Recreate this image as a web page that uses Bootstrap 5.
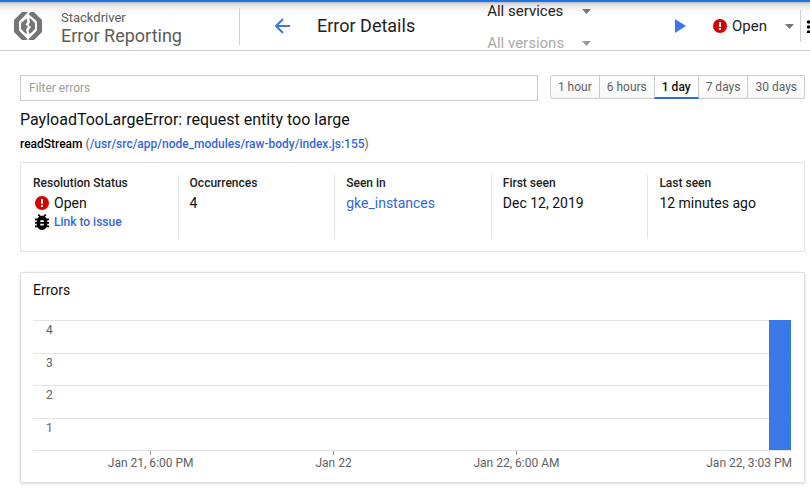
<!DOCTYPE html>
<html lang="en">
<head>
<meta charset="utf-8">
<meta name="viewport" content="width=device-width, initial-scale=1">
<title>Error Details</title>
<link rel="stylesheet" href="https://cdn.jsdelivr.net/npm/bootstrap@5.3.0/dist/css/bootstrap.min.css">
<style>
  body { font-family: Roboto, "Liberation Sans", sans-serif; font-size: 14px; line-height: 20px; color: #111; background: #fff; overflow-x: hidden; }
  a { color: #3367d6; text-decoration: none; }
  svg { display: block; flex: none; }
  .topbar { height: 51px; border-top: 2px solid #1a73e8; border-bottom: 1px solid #d0d0d0; background: linear-gradient(#bdbdbd, #e6e6e6 3px, #f7f7f7 8px, #fff 14px); overflow: hidden; }
  .brand { width: 239px; padding-left: 14px; gap: 19px; color: #5c5c5c; }
  .brand:hover { color: #5c5c5c; }
  .brand-text { padding-top: 3px; }
  .brand-top { font-size: 13px; line-height: 16px; }
  .brand-name { font-size: 18px; line-height: 20px; }
  .rule { width: 1px; background: #d0d0d0; flex: none; }
  .icon-btn { border: 0; background: none; padding: 0; flex: none; }
  .back { margin: 0 27px 0 34px; }
  .page-title { font-size: 18px; line-height: 24px; font-weight: 400; color: #222; }
  .picks { margin: 2px 0 0 72px; gap: 12px; }
  .pick { border: 0; padding: 0; width: 104px; height: 20px; font-size: 15px; line-height: 20px; color: #222; appearance: none;
    background: url("data:image/svg+xml,%3Csvg xmlns='http://www.w3.org/2000/svg' width='9' height='5'%3E%3Cpath d='M0 0h9L4.5 5z' fill='%23757575'/%3E%3C/svg%3E") no-repeat right 8px; }
  .pick:disabled { color: #aaa; opacity: 1; background-image: url("data:image/svg+xml,%3Csvg xmlns='http://www.w3.org/2000/svg' width='9' height='5'%3E%3Cpath d='M0 0h9L4.5 5z' fill='%239a9a9a'/%3E%3C/svg%3E"); }
  .pick-status { width: 62px; }
  .status { gap: 5px; margin: 0 6px 0 27px; }
  .more { width: 9px; overflow: hidden; }
  main { padding: 24px 5px 9px 20px; }
  .filter { height: 26px; border: 1px solid #ccc; border-radius: 0; padding: 0 8px; font-size: 12px; line-height: 16px; }
  .filter::placeholder { color: #9e9e9e; }
  .ranges .btn { height: 24px; padding: 3px 7px; font-size: 12px; line-height: 16px; border: 1px solid #ccc; border-radius: 2px; color: #616161; background: linear-gradient(#fff, #f8f8f8); }
  .ranges .btn.active { color: #111; border-bottom: 2px solid #3367d6; font-weight: 500; background: #fff; }
  .err-title { font-size: 16px; line-height: 20px; font-weight: 400; margin-top: 9px; }
  .frame-line { font-size: 12px; line-height: 16px; margin-top: 6px; color: #616161; }
  .medium { font-weight: 500; }
  .facts { margin-top: 10px; padding: 12px 0; border: 1px solid #e4e4e4; }
  .fact { min-height: 64px; padding-left: 12px; }
  .fact + .fact { padding-left: 11px; border-left: 1px solid #e4e4e4; }
  .fact-name { font-size: 12px; line-height: 16px; font-weight: 500; color: #222; }
  .fact-value { line-height: 20px; margin-top: 2px; }
  .issue { font-size: 12px; line-height: 16px; font-weight: 500; }
  .issue-row { margin-top: 1px; }
  .chart-card { margin-top: 20px; padding: 7px 12px 9px; border: 1px solid #e0e0e0; border-radius: 2px; box-shadow: 0 1px 3px rgba(0,0,0,.14); }
  .chart-title { font-size: 14px; line-height: 20px; font-weight: 400; }
  .plot { margin-top: 20px; height: 131px; border-bottom: 1px solid #e4e4e4; font-size: 12px; line-height: 18px; color: #616161; }
  .level { border-top: 1px solid #e4e4e4; padding-left: 13px; }
  .bar { bottom: 0; background: #3b78e7; }
  .times { height: 22px; font-size: 12px; line-height: 16px; color: #616161; }
  .time { position: absolute; top: 0; transform: translateX(-50%); white-space: nowrap; }
  .time::before { content: ""; display: block; width: 1px; height: 4px; margin: 0 auto; background: #999; }
  .time-end { transform: none; right: 0; }
  .time-end::before { background: none; }
</style>
<script src="https://cdn.jsdelivr.net/npm/bootstrap@5.3.0/dist/js/bootstrap.bundle.min.js"></script>
</head>
<body>
<header class="topbar d-flex align-items-center">
  <a class="brand d-flex align-items-center flex-shrink-0" href="#">
    <svg width="28" height="28" viewBox="0 0 28 28" fill="#757575" aria-hidden="true">
      <path d="M8 0h6L9.500 5 5 9.500v9L13.500 27l-1 1H8l-8-8V8z"/>
      <path d="M16.500 0H20l8 8v12l-8 8h-6l4.500-5 4.500-4.500v-9L14.500 2z"/>
      <path d="M12.500 6.500l1 3-2 3 2.500 2-2 3 1 4h-1.500L7 17v-6z"/>
      <path d="M15 6.500h1.500L21 11v6l-4.500 4.500H15l-.500-3 2.500-3.500-2.500-2 1.500-3z"/>
    </svg>
    <span class="brand-text d-flex flex-column">
      <span class="brand-top">Stackdriver</span>
      <span class="brand-name">Error Reporting</span>
    </span>
  </a>
  <div class="rule" style="height:37px"></div>
  <button class="icon-btn back" type="button" aria-label="Back">
    <svg width="16" height="16" viewBox="0 0 16 16" fill="none" stroke="#3b78e7" stroke-width="2"><path d="M16 8H2M9 1L2 8l7 7"/></svg>
  </button>
  <h1 class="page-title m-0 text-nowrap">Error Details</h1>
  <div class="picks d-flex flex-column flex-shrink-0">
    <select class="pick" aria-label="Service"><option>All services</option></select>
    <select class="pick" aria-label="Version" disabled><option>All versions</option></select>
  </div>
  <button class="icon-btn ms-auto" type="button" aria-label="Start">
    <svg width="11" height="14" viewBox="0 0 11 14" fill="#3b78e7"><path d="M0 0l11 7-11 7z"/></svg>
  </button>
  <div class="status d-flex align-items-center">
    <svg width="14" height="14" viewBox="0 0 14 14" aria-hidden="true"><circle cx="7" cy="7" r="7" fill="#d50000"/><path d="M6 3h2v5H6zM6 9h2v2H6z" fill="#fff"/></svg>
    <select class="pick pick-status" aria-label="Resolution status"><option>Open</option></select>
  </div>
  <div class="rule" style="height:32px"></div>
  <button class="icon-btn more" type="button" aria-label="More">
    <svg width="16" height="14" viewBox="0 0 16 14"><g><circle cx="7.500" cy="3" r="1.700"/><circle cx="7.500" cy="8" r="1.700"/><circle cx="7.500" cy="13" r="1.700"/></g></svg>
  </button>
</header>
<main>
  <div class="d-flex align-items-start gap-2">
    <input class="filter form-control flex-grow-1" type="text" placeholder="Filter errors" aria-label="Filter errors">
    <div class="ranges btn-group flex-shrink-0 ms-1" role="group" aria-label="Time range">
      <button class="btn" type="button">1 hour</button>
      <button class="btn" type="button">6 hours</button>
      <button class="btn active" type="button" aria-pressed="true">1 day</button>
      <button class="btn" type="button">7 days</button>
      <button class="btn" type="button">30 days</button>
    </div>
  </div>
  <h2 class="err-title mb-0">PayloadTooLargeError: request entity too large</h2>
  <div class="frame-line"><span class="medium text-black">readStream</span> (<a class="medium" href="#">/usr/src/app/node_modules/raw-body/index.js:155</a>)</div>
  <section class="facts row row-cols-5 g-0">
    <div class="fact col">
      <div class="fact-name">Resolution Status</div>
      <div class="fact-value d-flex align-items-center gap-1"><svg width="17" height="14" viewBox="0 0 17 14" aria-hidden="true"><circle cx="9" cy="7" r="7" fill="#d50000"/><path d="M8 3h2v5H8zM8 9h2v2H8z" fill="#fff"/></svg>Open</div>
      <div class="issue-row d-flex gap-1">
        <svg width="17" height="16" viewBox="1.700 3 19.400 18" aria-hidden="true"><path d="M20 8h-2.810c-.45-.78-1.070-1.450-1.820-1.960L17 4.410 15.590 3l-2.170 2.170C12.960 5.060 12.490 5 12 5s-.96.06-1.410.17L8.410 3 7 4.410l1.620 1.630C7.880 6.550 7.260 7.220 6.810 8H4v2h2.090c-.05.33-.09.66-.09 1v1H4v2h2v1c0 .34.04.67.09 1H4v2h2.810c1.040 1.790 2.970 3 5.190 3s4.150-1.210 5.190-3H20v-2h-2.090c.05-.33.09-.66.09-1v-1h2v-2h-2v-1c0-.34-.04-.67-.09-1H20V8zm-6 8h-4v-2h4v2zm0-4h-4v-2h4v2z"/></svg>
        <a class="issue" href="#">Link to issue</a>
      </div>
    </div>
    <div class="fact col"><div class="fact-name">Occurrences</div><div class="fact-value">4</div></div>
    <div class="fact col"><div class="fact-name">Seen in</div><div class="fact-value"><a href="#">gke_instances</a></div></div>
    <div class="fact col"><div class="fact-name">First seen</div><div class="fact-value">Dec 12, 2019</div></div>
    <div class="fact col"><div class="fact-name">Last seen</div><div class="fact-value">12 minutes ago</div></div>
  </section>
  <section class="chart-card">
    <h3 class="chart-title m-0">Errors</h3>
    <div class="plot position-relative d-flex flex-column">
      <div class="level flex-fill">4</div>
      <div class="level flex-fill">3</div>
      <div class="level flex-fill">2</div>
      <div class="level flex-fill">1</div>
      <div class="bar position-absolute" style="left:97%;width:2.9%;height:100%"></div>
    </div>
    <div class="times position-relative">
      <div class="time" style="left:15.5%">Jan 21, 6:00 PM</div>
      <div class="time" style="left:39.6%">Jan 22</div>
      <div class="time" style="left:63.7%">Jan 22, 6:00 AM</div>
      <div class="time time-end">Jan 22, 3:03 PM</div>
    </div>
  </section>
</main>
</body>
</html>
